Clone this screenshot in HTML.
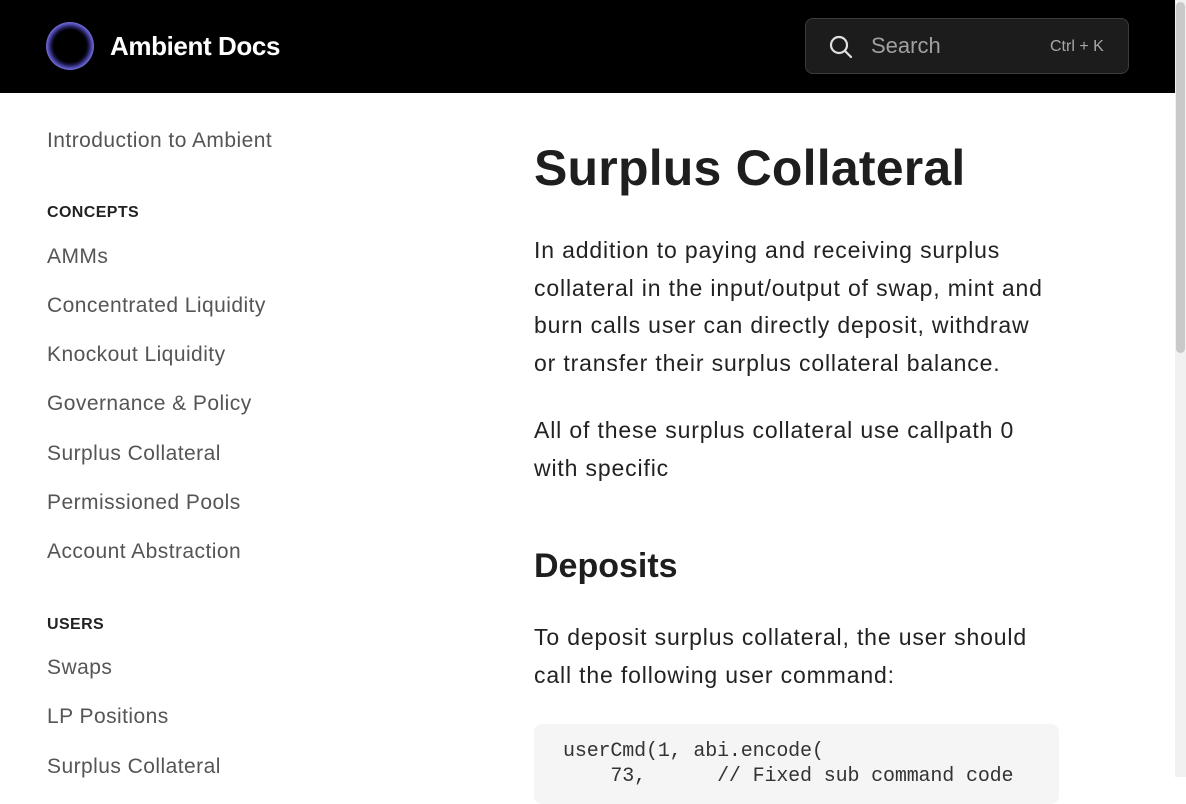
<!DOCTYPE html>
<html><head><meta charset="utf-8"><style>
*{margin:0;padding:0;box-sizing:border-box}
body{width:1186px;height:777px;overflow:hidden;background:#fff;font-family:"Liberation Sans",sans-serif;position:relative}
.hdr{position:absolute;left:0;top:0;width:1175px;height:93px;background:#000}
.logo{position:absolute;left:46px;top:22px;width:48px;height:48px;border-radius:50%;background:radial-gradient(circle,#000 48%,#1e1a50 56%,#5a54c0 66%,#9f9aee 78%,#b8b4f5 86%,#8a84e0 94%,#333 100%)}
.brand{position:absolute;left:110px;top:31px;color:#fff;font-weight:bold;font-size:26px;letter-spacing:-0.4px}
.search{position:absolute;left:805px;top:18px;width:324px;height:56px;background:#1c1c1c;border:1px solid #3c3c3c;border-radius:8px}
.search .ph{position:absolute;left:65px;top:14px;color:#a0a0a0;font-size:22px}
.search .k{position:absolute;left:244px;top:19px;color:#a8a8a8;font-size:16px}
.sb{position:absolute;left:47px;color:#555;font-size:21px;letter-spacing:0.45px}
.sh{position:absolute;left:47px;color:#222;font-size:16px;font-weight:bold;letter-spacing:0.4px}
h1{position:absolute;left:534px;top:139px;font-size:50px;font-weight:bold;color:#1e1e1e;letter-spacing:0.2px}
p{position:absolute;left:534px;font-size:23px;line-height:37.7px;color:#222;white-space:nowrap;letter-spacing:0.85px}
h2{position:absolute;left:534px;top:547px;font-size:34px;font-weight:bold;color:#1e1e1e}
.code{position:absolute;left:534px;top:724px;width:525px;height:80px;background:#f5f5f5;border-radius:8px;font-family:"Liberation Mono",monospace;font-size:20px;color:#333;padding:15px 0 0 29px;line-height:25px;white-space:pre;letter-spacing:-0.15px}
.track{position:absolute;left:1175px;top:0;width:11px;height:777px;background:#f1f1f1}
.thumb{position:absolute;left:1176px;top:2px;width:9px;height:351px;background:#c9c9c9;border-radius:5px}
</style></head><body>
<div class="hdr">
<div class="logo"></div>
<div class="brand">Ambient Docs</div>
<div class="search">
<svg style="position:absolute;left:22px;top:15px" width="26" height="26" viewBox="0 0 26 26"><circle cx="11" cy="11" r="8" fill="none" stroke="#e0e0e0" stroke-width="2.2"/><line x1="17" y1="17" x2="23" y2="23" stroke="#e0e0e0" stroke-width="2.2" stroke-linecap="round"/></svg>
<span class="ph">Search</span><span class="k">Ctrl + K</span>
</div>
</div>
<div class="track"></div><div class="thumb"></div>

<div class="sb" style="top:129px">Introduction to Ambient</div>
<div class="sh" style="top:204px">CONCEPTS</div>
<div class="sb" style="top:245px">AMMs</div>
<div class="sb" style="top:294px">Concentrated Liquidity</div>
<div class="sb" style="top:343px">Knockout Liquidity</div>
<div class="sb" style="top:392px">Governance &amp; Policy</div>
<div class="sb" style="top:442px">Surplus Collateral</div>
<div class="sb" style="top:491px">Permissioned Pools</div>
<div class="sb" style="top:540px">Account Abstraction</div>
<div class="sh" style="top:616px">USERS</div>
<div class="sb" style="top:656px">Swaps</div>
<div class="sb" style="top:705px">LP Positions</div>
<div class="sb" style="top:755px">Surplus Collateral</div>

<h1>Surplus Collateral</h1>
<p style="top:232px">In addition to paying and receiving surplus<br>collateral in the input/output of swap, mint and<br>burn calls user can directly deposit, withdraw<br>or transfer their surplus collateral balance.</p>
<p style="top:412px">All of these surplus collateral use callpath 0<br>with specific</p>
<h2>Deposits</h2>
<p style="top:619px">To deposit surplus collateral, the user should<br>call the following user command:</p>
<div class="code">userCmd(1, abi.encode(
    73,      // Fixed sub command code</div>
</body></html>
